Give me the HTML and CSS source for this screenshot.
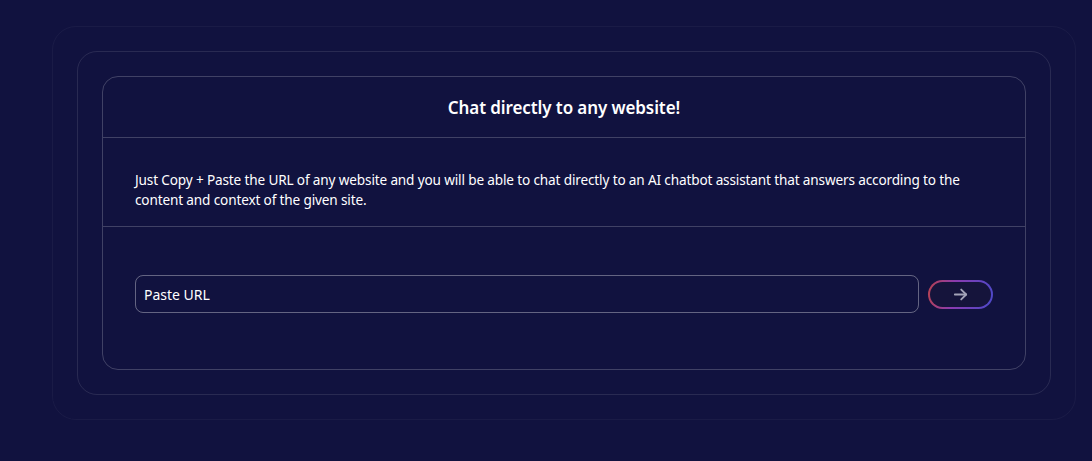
FILE: index.html
```html
<!DOCTYPE html>
<html lang="en">
<head>
<meta charset="utf-8">
<title>Chat directly to any website</title>
<link rel="stylesheet" href="styles.css">
</head>
<body>
  <div class="frame-outer">
    <div class="frame-middle">
      <section class="card">
        <header class="card-header">
          <h1 class="card-title">Chat directly to any website!</h1>
        </header>
        <div class="card-body">
          <p class="card-text">Just Copy + Paste the URL of any website and you will be able to chat directly to an AI chatbot assistant that answers according to the content and context of the given site.</p>
        </div>
        <div class="card-footer">
          <input class="url-input" type="text" placeholder="Paste URL">
          <button class="go-btn" type="button" aria-label="Submit">
            <span class="go-btn-inner">
              <svg width="17" height="17" viewBox="0 0 24 24" fill="none" stroke="currentColor" stroke-width="2.6" stroke-linecap="round" stroke-linejoin="round"><path d="M4 12h16"/><path d="M13 5l7 7-7 7"/></svg>
            </span>
          </button>
        </div>
      </section>
    </div>
  </div>
</body>
</html>
```
FILE: styles.css
```css
* { box-sizing: border-box; }
html, body { height: 100%; }
body {
  margin: 0;
  background: #11123f;
  font-family: "Noto Sans", "Open Sans", sans-serif;
  color: #ffffff;
  padding: 26px 16px 0 52px;
}
.frame-outer {
  border: 1px solid rgba(255,255,255,0.04);
  border-radius: 24px;
  padding: 24px;
}
.frame-middle {
  border: 1px solid rgba(255,255,255,0.1);
  border-radius: 20px;
  padding: 24px;
}
.card {
  border: 1px solid rgba(255,255,255,0.2);
  border-radius: 16px;
}
.card-header {
  height: 61px;
  display: flex;
  align-items: center;
  justify-content: center;
  border-bottom: 1px solid rgba(255,255,255,0.2);
}
.card-title {
  margin: 0;
  font-size: 17px;
  font-weight: 600;
  letter-spacing: -0.1px;
}
.card-body {
  padding: 32px 32px 16px;
  border-bottom: 1px solid rgba(255,255,255,0.2);
}
.card-text {
  margin: 0;
  font-size: 13.6px;
  letter-spacing: -0.15px;
  line-height: 20px;
}
.card-footer {
  display: flex;
  align-items: center;
  gap: 9px;
  padding: 48px 32px 56px;
}
.url-input {
  flex: 1;
  min-width: 0;
  height: 38px;
  background: transparent;
  border: 1px solid rgba(255,255,255,0.35);
  border-radius: 8px;
  padding: 0 8px;
  color: #fff;
  font: inherit;
  font-size: 14px;
}
.url-input::placeholder { color: #ffffff; opacity: 1; }
.go-btn {
  flex: 0 0 65px;
  width: 65px;
  height: 29px;
  padding: 2px;
  border: 0;
  border-radius: 15px;
  background: linear-gradient(100deg, #b8424e 0%, #8a3bb0 40%, #4b49c9 100%);
  cursor: pointer;
}
.go-btn-inner {
  display: flex;
  align-items: center;
  justify-content: center;
  width: 100%;
  height: 100%;
  border-radius: 13px;
  background: #15143b;
  color: #a3a3b8;
}
```
